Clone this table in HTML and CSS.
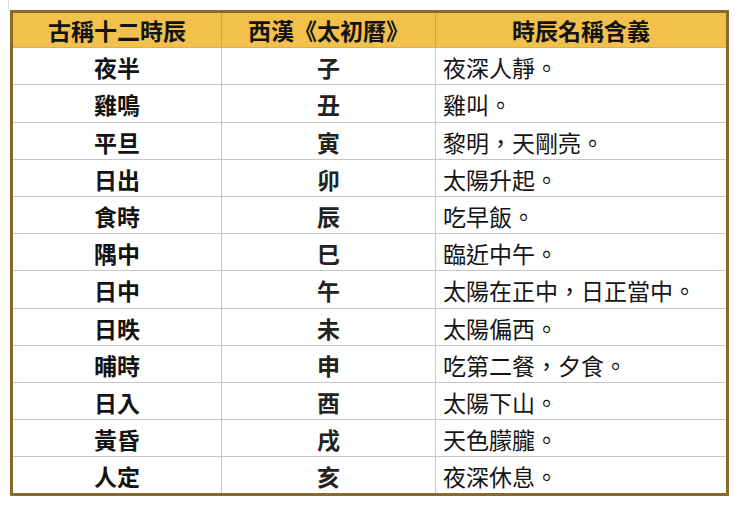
FILE: index.html
```html
<!DOCTYPE html>
<html lang="zh-Hant">
<head>
<meta charset="utf-8">
<link rel="stylesheet" href="styles.css">
</head>
<body>
<div class="sheet">
<table class="hours">
<colgroup><col class="c1"><col class="c2"><col class="c3"></colgroup>
<thead>
<tr><th>古稱十二時辰</th><th>西漢《太初曆》</th><th>時辰名稱含義</th></tr>
</thead>
<tbody>
<tr><td class="name">夜半</td><td class="branch">子</td><td class="desc">夜深人靜。</td></tr>
<tr><td class="name">雞鳴</td><td class="branch">丑</td><td class="desc">雞叫。</td></tr>
<tr><td class="name">平旦</td><td class="branch">寅</td><td class="desc">黎明，天剛亮。</td></tr>
<tr><td class="name">日出</td><td class="branch">卯</td><td class="desc">太陽升起。</td></tr>
<tr><td class="name">食時</td><td class="branch">辰</td><td class="desc">吃早飯。</td></tr>
<tr><td class="name">隅中</td><td class="branch">巳</td><td class="desc">臨近中午。</td></tr>
<tr><td class="name">日中</td><td class="branch">午</td><td class="desc">太陽在正中，日正當中。</td></tr>
<tr><td class="name">日昳</td><td class="branch">未</td><td class="desc">太陽偏西。</td></tr>
<tr><td class="name">晡時</td><td class="branch">申</td><td class="desc">吃第二餐，夕食。</td></tr>
<tr><td class="name">日入</td><td class="branch">酉</td><td class="desc">太陽下山。</td></tr>
<tr><td class="name">黃昏</td><td class="branch">戌</td><td class="desc">天色朦朧。</td></tr>
<tr><td class="name">人定</td><td class="branch">亥</td><td class="desc">夜深休息。</td></tr>
</tbody>
</table>
</div>
</body>
</html>
```
FILE: styles.css
```css
html, body {
  margin: 0;
  padding: 0;
  background: #ffffff;
}
body {
  font-family: "Noto Sans CJK TC", "Noto Sans CJK SC", sans-serif;
  color: #141414;
  width: 740px;
  height: 506px;
  overflow: hidden;
  background-image:
    linear-gradient(to right, transparent 8px, #dcdcdc 8px, #dcdcdc 9px, transparent 9px);
  background-size: 100% 10px;
  background-repeat: no-repeat;
}
.sheet {
  padding: 10px 0 0 10px;
}
.hours {
  width: 719px;
  border-collapse: collapse;
  table-layout: fixed;
  border: 3.5px solid #8a6a2b;
  background: #ffffff;
}
.c1 { width: 210px; }
.c2 { width: 214px; }
.c3 { width: auto; }
.hours th,
.hours td {
  height: 34.2px;
  padding: 2px 0 0 0;
  border: 1px solid #c6c6c6;
  font-size: 23px;
  line-height: 32px;
  white-space: nowrap;
  overflow: hidden;
}
.hours th {
  background: #f1c14b;
  font-weight: 700;
  text-align: center;
  padding-top: 0;
  border-color: #d9b04a #c9a64a;
}
.name {
  font-weight: 700;
  text-align: center;
}
.branch {
  font-weight: 700;
  color: #222222;
  text-align: center;
}
.desc {
  text-align: left;
  padding-left: 7px !important;
  font-weight: 400;
}
```
